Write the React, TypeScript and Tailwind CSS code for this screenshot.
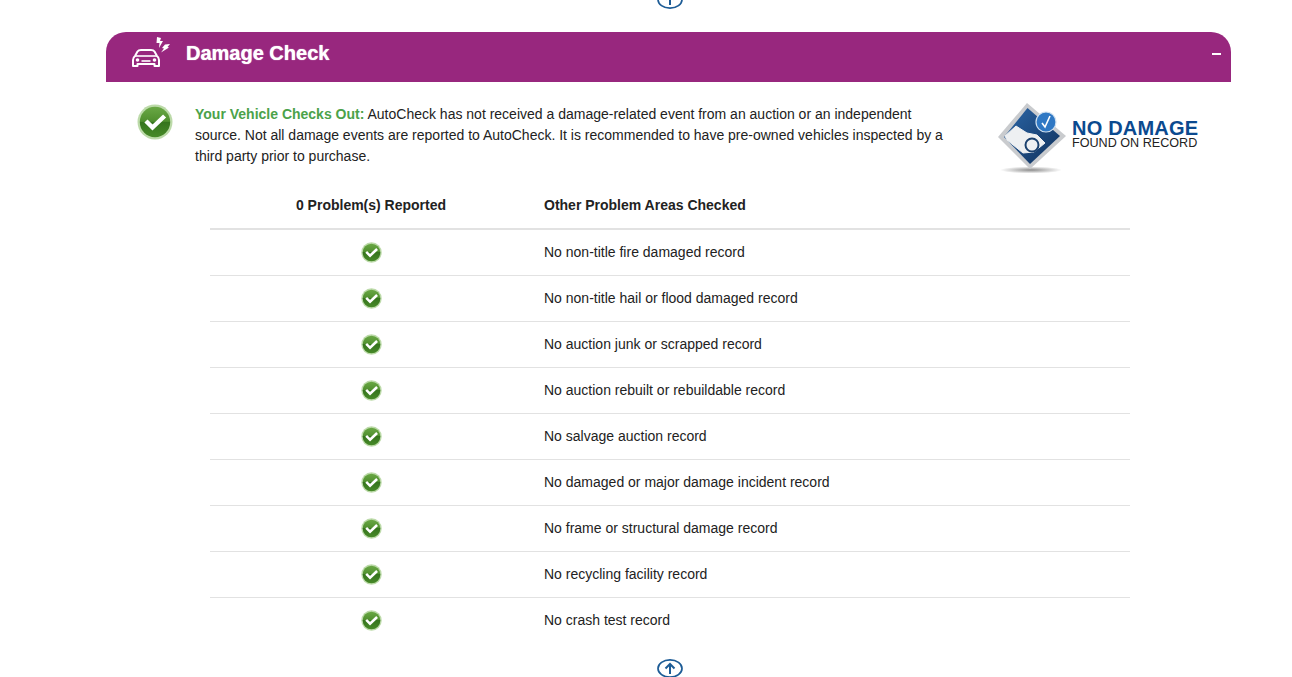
const checks = [
  "No non-title fire damaged record",
  "No non-title hail or flood damaged record",
  "No auction junk or scrapped record",
  "No auction rebuilt or rebuildable record",
  "No salvage auction record",
  "No damaged or major damage incident record",
  "No frame or structural damage record",
  "No recycling facility record",
  "No crash test record",
];

function CheckBadge({ size, id }: { size: number; id: string }) {
  return (
    <svg width={size} height={size} viewBox="0 0 36 36" className="block">
      <defs>
        <linearGradient id={id} x1="0" y1="0" x2="0" y2="1">
          <stop offset="0" stopColor="#6aa845" />
          <stop offset="0.48" stopColor="#4f8f2e" />
          <stop offset="0.5" stopColor="#35741d" />
          <stop offset="1" stopColor="#478a28" />
        </linearGradient>
      </defs>
      <circle cx="18" cy="18" r="17.5" fill="#bcdaa9" />
      <circle cx="18" cy="18" r="15.2" fill={`url(#${id})`} />
      <path d="M10.5 18.5 L15.5 23.5 L26 13.5" fill="none" stroke="#fff" strokeWidth="4.4" strokeLinecap="square" />
    </svg>
  );
}

function UpArrow() {
  return (
    <svg width="26" height="19" viewBox="0 0 26 19" className="block">
      <ellipse cx="13" cy="9.5" rx="12" ry="8.6" fill="none" stroke="#1d5c96" strokeWidth="1.7" />
      <path d="M13 15 V5 M8.5 9.5 L13 5 L17.5 9.5" fill="none" stroke="#1d5c96" strokeWidth="2" />
    </svg>
  );
}

function CarIcon() {
  return (
    <svg width="40" height="36" viewBox="0 0 40 36" className="block" fill="none">
      <path
        d="M5 20 L7.5 15.5 Q8.5 14 11 14 H21 Q23.5 14 24.5 15.5 L27 20 Q29 21.5 29 24 V30 H24.5 V28 H7.5 V30 H3 V24 Q3 21.5 5 20 Z"
        stroke="#fff"
        strokeWidth="2"
        strokeLinejoin="round"
      />
      <path d="M5 20 H27" stroke="#fff" strokeWidth="1.6" />
      <circle cx="7.5" cy="24" r="1.8" fill="#fff" />
      <circle cx="24.5" cy="24" r="1.8" fill="#fff" />
      <path d="M11.5 25 H20.5" stroke="#fff" strokeWidth="1.6" />
      <path d="M27 1 L31 2 L30 5 L33 5 L29 12 L29.5 7 L26.5 7 Z" fill="#fff" />
      <path d="M35 8.5 L40 8 L37.5 11 L39 11.5 L31 16.5 L34 12.5 L32 12 Z" fill="#fff" />
    </svg>
  );
}

function DamageBadge() {
  return (
    <svg width="68" height="72" viewBox="0 0 68 72" className="block">
      <defs>
        <linearGradient id="bg" x1="0" y1="0" x2="1" y2="1">
          <stop offset="0" stopColor="#2b66a8" />
          <stop offset="1" stopColor="#10305a" />
        </linearGradient>
        <radialGradient id="shadow">
          <stop offset="0" stopColor="#8d8d8d" />
          <stop offset="1" stopColor="#ffffff" />
        </radialGradient>
      </defs>
      <ellipse cx="33" cy="67" rx="31" ry="3.5" fill="url(#shadow)" />
      <path d="M29 0 L68 33 L32 66 L0 34 Z" fill="#c9cbce" />
      <path d="M29.5 5 L62 33 L32 61 L6 34 Z" fill="url(#bg)" />
      <path
        d="M7 33 L18 23 L29 30 L39 32 L47 40 L36 49 L25 50 L9 37 Z"
        fill="#eef0f2"
        stroke="#eef0f2"
        strokeLinejoin="round"
      />
      <circle cx="34" cy="42" r="6.5" fill="#eef0f2" stroke="#1b416f" strokeWidth="2" />
      <circle cx="48" cy="19" r="10" fill="#2f78c4" stroke="#cfe0f0" strokeWidth="1.2" />
      <path d="M44 20 L47 24 L52 13" fill="none" stroke="#fff" strokeWidth="1.6" />
    </svg>
  );
}

export default function App() {
  return (
    <div className="h-[677px] overflow-hidden bg-white font-['Liberation_Sans',Arial,sans-serif] text-[14px] text-[#222]">
      <div className="ml-[106px] w-[1125px]">
        <div className="-mt-[10px] flex justify-center pl-[2px]">
          <UpArrow />
        </div>

        <div className="mt-[23px] flex h-[50px] items-center rounded-t-[20px] bg-[#98277e] pl-[24px] pr-[10px] text-white">
          <div className="mb-[6px]">
            <CarIcon />
          </div>
          <h2 className="mb-[8px] ml-[16px] text-[20px] font-bold [text-shadow:0_0_1px_#fff]">Damage Check</h2>
          <span className="mb-[7px] ml-auto h-[2px] w-[9px] bg-white" />
        </div>

        <div className="flex h-[101px] items-start">
          <div className="ml-[31px] mt-[22px] shrink-0">
            <CheckBadge size={36} id="large" />
          </div>
          <p className="ml-[22px] mt-[22px] w-[760px] leading-[21px]">
            <strong className="text-[#4ba24a]">Your Vehicle Checks Out:</strong> AutoCheck has not received a
            damage-related event from an auction or an independent source. Not all damage events are reported to
            AutoCheck. It is recommended to have pre-owned vehicles inspected by a third party prior to purchase.
          </p>
          <div className="ml-[43px] mt-[21px] flex shrink-0 items-start">
            <DamageBadge />
            <div className="ml-[6px] mt-[17px] whitespace-nowrap">
              <div className="text-[20px] font-bold leading-[16px] tracking-[0.2px] text-[#0b4a8f]">NO DAMAGE</div>
              <div className="text-[12.6px] leading-[14px] text-[#222]">FOUND ON RECORD</div>
            </div>
          </div>
        </div>

        <table className="ml-[104px] w-[920px] table-fixed border-collapse">
          <thead>
            <tr className="h-[46px] border-b-2 border-[#e2e2e2]">
              <th className="w-[322px] text-center font-bold">0 Problem(s) Reported</th>
              <th className="pl-[12px] text-left font-bold">Other Problem Areas Checked</th>
            </tr>
          </thead>
          <tbody>
            {checks.map((label, i) => (
              <tr key={label} className="h-[46px] border-b border-[#e2e2e2] last:border-b-0">
                <td>
                  <div className="flex justify-center">
                    <CheckBadge size={21} id={`row-${i}`} />
                  </div>
                </td>
                <td className="pl-[12px]">{label}</td>
              </tr>
            ))}
          </tbody>
        </table>

        <div className="mt-[16px] flex justify-center pl-[2px]">
          <UpArrow />
        </div>
      </div>
    </div>
  );
}
